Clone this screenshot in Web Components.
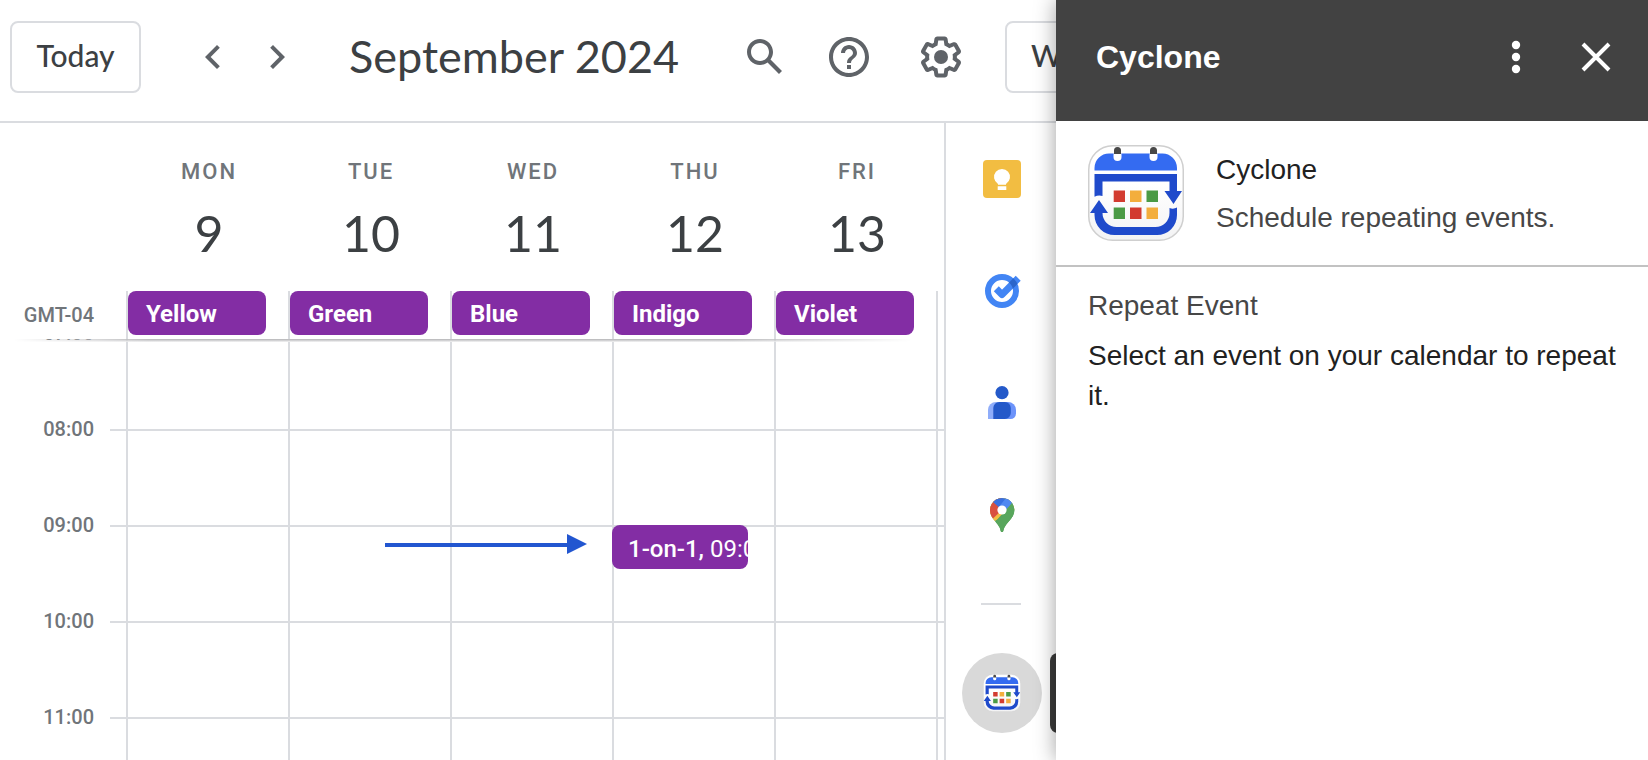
<!DOCTYPE html>
<html lang="en">
<head>
<meta charset="utf-8">
<title>Calendar - September 2024</title>
<style>
  html, body { height: 100%; margin: 0; }
  body { background: #fff; font-family: Roboto, "Liberation Sans", sans-serif; color: #3c4043; overflow: hidden; }
</style>
</head>
<body>
<calendar-app>
  <calendar-header slot="header" heading="September 2024"></calendar-header>
  <week-view slot="week"></week-view>
  <side-rail slot="rail"></side-rail>
  <addon-panel slot="panel" heading="Cyclone">
    <span slot="name">Cyclone</span>
    <span slot="tagline">Schedule repeating events.</span>
    <span slot="section">Repeat Event</span>
    <span slot="message">Select an event on your calendar to repeat it.</span>
  </addon-panel>
</calendar-app>

<script>
const define = (name, render) => customElements.define(name, class extends HTMLElement {
  connectedCallback() {
    if (this.shadowRoot) return;
    const template = document.createElement('template');
    template.innerHTML = render(this);
    this.attachShadow({ mode: 'open' }).append(template.content.cloneNode(true));
  }
});

/* App frame: calendar on the left, add-on panel on the right */
define('calendar-app', () => `
<style>
  :host { display: grid; grid-template-columns: minmax(0, 1fr) 592px; height: 100vh; }
  main { display: flex; flex-direction: column; min-width: 0; min-height: 0; overflow: hidden; }
  .body { display: flex; flex: 1; min-height: 0; }
</style>
<main>
  <slot name="header"></slot>
  <div class="body"><slot name="week"></slot><slot name="rail"></slot></div>
</main>
<slot name="panel"></slot>`);

define('icon-button', el => `
<style>
  :host { display: block; flex: none; width: 80px; }
  button { display: flex; align-items: center; justify-content: center; width: 100%; height: 64px;
    padding: 0; border: 0; background: none; color: inherit; }
  ::slotted(svg) { display: block; flex: none; }
</style>
<button type="button" aria-label="${el.getAttribute('label')}"><slot></slot></button>`);

define('calendar-header', el => `
<style>
  :host { display: flex; align-items: center; flex: none; height: 123px; padding: 0 0 8px 10px; box-sizing: border-box;
    border-bottom: 2px solid #dadce0; color: #5f6368; }
  .outlined { flex: none; height: 72px; box-sizing: border-box; border: 2px solid #dadce0; border-radius: 8px; background: #fff;
    font: 500 30px/32px Lato, "Open Sans", sans-serif; color: #3c4043; padding: 0 24px 4px; text-align: left; }
  .today { width: 131px; padding: 0 0 4px; text-align: center; margin-right: 40px; }
  .nav { width: 64px; }
  h1 { flex: 1; min-width: 0; margin: 0 0 0 40px; padding-bottom: 2px; font: 400 45px/56px Lato, "Open Sans", sans-serif; color: #3c4043; white-space: nowrap; }
  .help { margin: 0 12px 0 4px; }
  .view { flex: none; width: 51px; margin-left: 24px; }
  .view button { width: 160px; }
</style>
<button type="button" class="outlined today">Today</button>
<icon-button class="nav" label="Previous week"><svg width="48" height="48" viewBox="0 0 24 24" fill="currentColor"><path d="M15.41 7.41 14 6l-6 6 6 6 1.41-1.41L10.83 12z"/></svg></icon-button>
<icon-button class="nav" label="Next week"><svg width="48" height="48" viewBox="0 0 24 24" fill="currentColor"><path d="M10 6 8.59 7.41 13.17 12l-4.58 4.59L10 18l6-6z"/></svg></icon-button>
<h1>${el.getAttribute('heading')}</h1>
<icon-button label="Search"><svg width="48" height="48" viewBox="0 0 24 24" fill="currentColor"><path d="M20.49 19l-5.73-5.73C15.53 12.2 16 10.91 16 9.5 16 5.91 13.09 3 9.5 3S3 5.91 3 9.5 5.91 16 9.5 16c1.41 0 2.7-.47 3.77-1.24L19 20.49 20.49 19zM5 9.5C5 7.01 7.01 5 9.5 5S14 7.01 14 9.5 11.99 14 9.5 14 5 11.99 5 9.5z"/></svg></icon-button>
<icon-button class="help" label="Help"><svg width="48" height="48" viewBox="0 0 24 24" fill="currentColor"><path d="M11 18h2v-2h-2v2zm1-16C6.48 2 2 6.48 2 12s4.48 10 10 10 10-4.48 10-10S17.52 2 12 2zm0 18c-4.41 0-8-3.59-8-8s3.59-8 8-8 8 3.59 8 8-3.59 8-8 8zm0-14c-2.21 0-4 1.79-4 4h2c0-1.1.9-2 2-2s2 .9 2 2c0 2-3 1.75-3 5h2c0-2.25 3-2.5 3-5 0-2.21-1.79-4-4-4z"/></svg></icon-button>
<icon-button label="Settings"><svg width="48" height="48" viewBox="0 0 24 24" fill="currentColor"><path d="M13.85 22.25h-3.7c-.74 0-1.36-.54-1.45-1.27l-.27-1.89c-.27-.14-.53-.29-.79-.46l-1.8.72c-.7.26-1.47-.03-1.81-.65L2.2 15.53c-.35-.66-.2-1.44.36-1.88l1.53-1.19c-.01-.15-.02-.3-.02-.46 0-.15.01-.31.02-.46l-1.52-1.19c-.59-.45-.74-1.26-.37-1.88l1.85-3.19c.34-.62 1.11-.9 1.79-.63l1.81.73c.26-.17.52-.32.78-.46l.27-1.91c.09-.7.71-1.25 1.44-1.25h3.7c.74 0 1.36.54 1.45 1.27l.27 1.89c.27.14.53.29.79.46l1.8-.72c.71-.26 1.48.03 1.82.65l1.84 3.18c.36.66.2 1.44-.36 1.88l-1.52 1.19c.01.15.02.3.02.46s-.01.31-.02.46l1.52 1.19c.56.45.72 1.23.37 1.86l-1.86 3.22c-.34.62-1.11.9-1.8.63l-1.8-.72c-.26.17-.52.32-.78.46l-.27 1.91c-.1.68-.72 1.22-1.46 1.22zm-3.23-2h2.76l.37-2.55.53-.22c.44-.18.88-.44 1.34-.78l.45-.34 2.38.96 1.38-2.4-2.03-1.58.07-.56c.03-.26.06-.51.06-.78s-.03-.53-.06-.78l-.07-.56 2.03-1.58-1.39-2.4-2.39.96-.45-.35c-.42-.32-.87-.58-1.33-.77l-.52-.22-.37-2.55h-2.76l-.37 2.55-.53.21c-.44.19-.88.44-1.34.79l-.45.33-2.38-.95-1.39 2.39 2.03 1.58-.07.56a7 7 0 0 0-.06.79c0 .26.02.53.06.78l.07.56-2.03 1.58 1.38 2.4 2.39-.96.45.35c.43.33.86.58 1.33.77l.53.22.38 2.55z"/><circle cx="12" cy="12" r="3.5"/></svg></icon-button>
<div class="view"><button type="button" class="outlined">Week</button></div>`);

define('event-chip', () => `
<style>
  :host { display: block; box-sizing: border-box; height: 44px; border-radius: 8px; background: #832da4; color: #fff;
    overflow: hidden; white-space: nowrap; padding: 0 18px; font: 700 24px/46px Roboto, sans-serif; }
</style>
<slot></slot>`);

const days = [['MON', 9, 'Yellow'], ['TUE', 10, 'Green'], ['WED', 11, 'Blue'], ['THU', 12, 'Indigo'], ['FRI', 13, 'Violet']];

define('day-heading', () => `
<style>
  :host { display: block; text-align: center; padding: 33px 0 26px 4px; }
  .name { display: block; font: 500 22px/32px Roboto, sans-serif; letter-spacing: 2px; color: #70757a; }
  .date { display: block; margin-top: 13px; font: 400 50px/64px Lato, sans-serif; color: #3c4043; }
</style>
<span class="name"><slot name="name"></slot></span><span class="date"><slot></slot></span>`);

define('hour-row', el => `
<style>
  :host { display: grid; grid-template-columns: 94px 16px 16px repeat(5, minmax(0, 1fr)) 8px; height: 96px; }
  .label { margin-top: -12px; font: 500 20px/24px Roboto, sans-serif; color: #70757a; text-align: right; height: 24px; }
  .tick { grid-column: 3; border-top: 2px solid #dadce0; }
  .cell { position: relative; border: solid #dadce0; border-width: 2px 0 0 2px; }
  ::slotted(*) { position: absolute; z-index: 1; }
</style>
<span class="label">${el.getAttribute('time')}</span><span class="tick"></span>
${days.map(d => `<div class="cell"><slot name="${d[0]}"></slot></div>`).join('')}<div class="cell"></div>`);

define('week-view', () => `
<style>
  :host { display: flex; flex-direction: column; flex: 1; min-width: 0; min-height: 0; }
  .days, .allday { display: grid; grid-template-columns: 126px repeat(5, minmax(0, 1fr)) 8px; flex: none; }
  .zone { padding-right: 32px; text-align: right; font: 500 20px/48px Roboto, sans-serif; color: #70757a; }
  .slot { height: 48px; border-left: 2px solid #dadce0; }
  .slot event-chip { margin-right: 22px; }
  .hours { position: relative; flex: 1; min-height: 0; overflow: hidden; }
  .shade { position: absolute; z-index: 2; top: 0; left: 14px; right: 32px; height: 3px;
    background: linear-gradient(#b4b4b6, #d8d8da 60%, #f6f6f6);
    -webkit-mask-image: linear-gradient(90deg, transparent, #000 15%, #000 80%, transparent);
    mask-image: linear-gradient(90deg, transparent, #000 15%, #000 80%, transparent); }
  .rows { margin-top: -6px; }
  .meeting { top: -2px; left: -2px; right: 26px; padding: 0 16px; font-weight: 500; line-height: 48px; }
  .meeting span { font-weight: 400; }
  .arrow { top: 7px; left: 95px; }
</style>
<div class="days"><span></span>
${days.map(d => `<day-heading><span slot="name">${d[0]}</span>${d[1]}</day-heading>`).join('')}</div>
<div class="allday"><span class="zone">GMT-04</span>
${days.map(d => `<div class="slot"><event-chip>${d[2]}</event-chip></div>`).join('')}<div class="slot"></div></div>
<div class="hours"><div class="shade"></div><div class="rows">
  <hour-row time="07:00"></hour-row>
  <hour-row time="08:00"></hour-row>
  <hour-row time="09:00">
    <svg class="arrow" slot="TUE" width="202" height="20" viewBox="0 0 202 20" fill="#2256d0"><path d="M0 9h182v4H0z"/><path d="M182 0l20 10-20 10z"/></svg>
    <event-chip class="meeting" slot="THU">1-on-1, <span>09:00</span></event-chip>
  </hour-row>
  <hour-row time="10:00"></hour-row>
  <hour-row time="11:00"></hour-row>
</div></div>`);

/* Cyclone logo: a calendar page wrapped by two arrows */
define('cyclone-logo', () => `
<style>:host { display: block; flex: none; width: 96px; height: 96px; } svg { display: block; width: 100%; height: 100%; }</style>
<svg viewBox="0 0 96 96" role="img" aria-label="Cyclone logo">
  <defs><linearGradient id="g" x1="0" y1="0" x2="0" y2="1"><stop offset=".4" stop-color="#fff"/><stop offset="1" stop-color="#f3f3f4"/></linearGradient></defs>
  <rect x=".75" y=".75" width="94.5" height="94.5" rx="24" fill="url(#g)" stroke="#cfcfcf" stroke-width="1.5"/>
  <path d="M6.500 25.500v-2.500a14.500 14.500 0 0 1 14.500-14.500h53.500a14.500 14.500 0 0 1 14.500 14.500v2.500z" fill="#346bf1"/>
  <g fill="#fff"><rect x="25.500" y="6" width="8" height="10" rx="4"/><rect x="61.500" y="6" width="8" height="10" rx="4"/></g>
  <g fill="#484848"><path d="M26 9V5.500a3.500 3.500 0 0 1 7 0V9zM62 9V5.500a3.500 3.500 0 0 1 7 0V9z"/></g>
  <g fill="#1f4acb">
    <path d="M6.500 29H89v17h5l-8.500 13L76.500 46h5v-9.500h-67V51q-4-1.500-8 .8z"/>
    <path d="M11 55l9 13h-5.500a14 14 0 0 0 14 14h39a14 14 0 0 0 14-14v-5q4 1.500 7.500-.5V70a20 20 0 0 1-20 20H26.500a20 20 0 0 1-20-20v-2H2z"/>
  </g>
  <g fill="#d23b30"><path d="M25.700 45.500H37V57H25.700zM42 62.500h11.500V74H42z"/></g>
  <g fill="#f3ae3d"><path d="M42 45.500h11.500V57H42zM58.500 62.500H70V74H58.500z"/></g>
  <g fill="#4b9a45"><path d="M58.500 45.500H70V57H58.500zM25.700 62.500H37V74H25.700z"/></g>
</svg>`);

define('side-rail', () => `
<style>
  :host { display: flex; flex-direction: column; align-items: flex-start; flex: none; position: relative; width: 110px; border-left: 2px solid #dadce0; }
  icon-button { display: flex; align-items: center; width: 112px; height: 112px; flex: none; }
  hr { width: 40px; height: 2px; margin: 32px 35px; border: 0; background: #dadce0; }
  .halo { display: flex; align-items: center; justify-content: center; width: 80px; height: 80px; border-radius: 50%; background: #d9d9d9; }
  .halo cyclone-logo { width: 38px; height: 38px; }
  .tip { position: absolute; top: 530px; left: 104px; width: 40px; height: 80px; border-radius: 8px; background: #3c3c3b; }
</style>
<icon-button label="Keep"><svg width="40" height="40" viewBox="-20 -20 40 40"><rect x="-19" y="-19" width="38" height="38" rx="4" fill="#f2bd42"/><path d="M-4 5.700V4.900A8 8 0 1 1 4 4.900v.8zM-4.300 7.300h8.600V11h-8.600z" fill="#fff"/></svg></icon-button>
<icon-button label="Tasks"><svg width="40" height="40" viewBox="-20 -20 40 40"><defs><clipPath id="ring"><path clip-rule="evenodd" d="M-17 0a17 17 0 1 1 34 0 17 17 0 1 1-34 0zM-11 0a11 11 0 1 0 22 0 11 11 0 1 0-22 0z"/></clipPath></defs><circle r="14" fill="#fff" stroke="#4285f4" stroke-width="6"/><g fill="none" stroke-width="7" stroke-linejoin="round"><path d="M-5.700-2.200 0 3.600 16.200-12.800" stroke="#4285f4"/><path d="M0 3.600 16.200-12.800" stroke="#2b66cb" clip-path="url(#ring)"/></g></svg></icon-button>
<icon-button label="Contacts"><svg width="40" height="40" viewBox="-20 -20 40 40"><circle cy="-10.300" r="6.600" fill="#2459c9"/><path d="M-14 16V7a8 8 0 0 1 8-8h5v17z" fill="#8fadfa"/><path d="M0-1h6a8 8 0 0 1 8 8v3.500a5.500 5.500 0 0 1-5.500 5.500H0z" fill="#6c93fa"/><path d="M-8.700 16V5a6 6 0 0 1 6-6h5.500a6 6 0 0 1 6 6v5a6 6 0 0 1-6 6z" fill="#2459c9"/></svg></icon-button>
<icon-button label="Maps"><svg width="40" height="40" viewBox="-20 -20 40 40"><defs><clipPath id="pin"><path d="M0 17c-1.600 0-1.400-2.600-2.400-4.600C-4.500 8-8.500 5.500-10.600 1A12.200 12.200 0 1 1 10.900 1C8.500 5.500 4.500 8 2.400 12.400 1.400 14.400 1.600 17 0 17z"/></clipPath></defs><g clip-path="url(#pin)"><path d="M-20-20h40v40h-40z" fill="#58a65c"/><path d="M-20-20h45v8L-9 7l-11 3z" fill="#f2bd42"/><path d="M-20-20H0v15L-10.600 5-20 6z" fill="#d9503f"/><path d="M-20-20h40v7.500H10L0-5l-9-8-11-2z" fill="#3871e0"/><path d="M4-17 20-20v6L9-9.700 3-4-3-8.300z" fill="#5089f0"/><path d="M20-17 9.800-11.800-7 7l8 14 20-2z" fill="#58a65c"/></g><circle cy="-5" r="4.600" fill="#fff"/></svg></icon-button>
<hr>
<icon-button label="Cyclone"><div class="halo"><cyclone-logo></cyclone-logo></div></icon-button>
<div class="tip"></div>`);

define('addon-panel', el => `
<style>
  :host { display: block; position: relative; z-index: 3; background: #fff; box-shadow: 0 0 20px rgba(0, 0, 0, .38);
    font: 400 28px/40px "Liberation Sans", Arial, sans-serif; color: #212121; }
  header { display: flex; align-items: center; height: 121px; padding: 0 12px 8px 40px; box-sizing: border-box; background: #424242; color: #fff; }
  h2 { flex: 1; margin: 0; font-size: 32px; line-height: 40px; font-weight: 700; }
  .intro { display: flex; gap: 32px; padding: 24px 32px; height: 96px; border-bottom: 2px solid #c2c2c2; }
  .intro p { margin: 0; line-height: 48px; }
  .intro div { padding-top: 1px; }
  .muted, h3 { color: #474747; }
  section { padding: 15px 32px; }
  h3 { margin: 0; font: inherit; line-height: 48px; }
  section p { margin: 6px 0 0; }
</style>
<header>
  <h2>${el.getAttribute('heading')}</h2>
  <icon-button label="More options"><svg width="48" height="48" viewBox="0 0 48 48" fill="#fff"><circle cx="24" cy="12" r="4.200"/><circle cx="24" cy="24" r="4.200"/><circle cx="24" cy="36" r="4.200"/></svg></icon-button>
  <icon-button label="Close"><svg width="48" height="48" viewBox="0 0 48 48" fill="none" stroke="#fff" stroke-width="4"><path d="M11 11l26 26M37 11 11 37"/></svg></icon-button>
</header>
<div class="intro"><cyclone-logo></cyclone-logo><div><p><slot name="name"></slot></p><p class="muted"><slot name="tagline"></slot></p></div></div>
<section><h3><slot name="section"></slot></h3><p><slot name="message"></slot></p></section>`);
</script>
</body>
</html>
